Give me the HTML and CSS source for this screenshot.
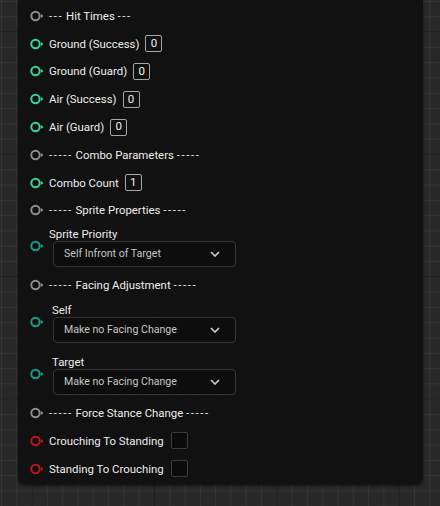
FILE: index.html
```html
<!DOCTYPE html>
<html>
<head>
<meta charset="utf-8">
<link rel="stylesheet" href="styles.css">
</head>
<body>
<div class="panel">
  <div class="row"><svg class="pin pin-gray" viewBox="0 0 14 12"><circle cx="5.5" cy="6" r="4.2"/><polygon points="11,4 13.5,6 11,8"/></svg><span class="label"><span class="dash">---</span> Hit Times <span class="dash">---</span></span></div>
  <div class="row"><svg class="pin pin-teal" viewBox="0 0 14 12"><circle cx="5.5" cy="6" r="4.2"/><polygon points="11,4 13.5,6 11,8"/></svg><span class="label">Ground (Success)</span><span class="num">0</span></div>
  <div class="row"><svg class="pin pin-teal" viewBox="0 0 14 12"><circle cx="5.5" cy="6" r="4.2"/><polygon points="11,4 13.5,6 11,8"/></svg><span class="label">Ground (Guard)</span><span class="num">0</span></div>
  <div class="row"><svg class="pin pin-teal" viewBox="0 0 14 12"><circle cx="5.5" cy="6" r="4.2"/><polygon points="11,4 13.5,6 11,8"/></svg><span class="label">Air (Success)</span><span class="num">0</span></div>
  <div class="row"><svg class="pin pin-teal" viewBox="0 0 14 12"><circle cx="5.5" cy="6" r="4.2"/><polygon points="11,4 13.5,6 11,8"/></svg><span class="label">Air (Guard)</span><span class="num">0</span></div>
  <div class="row"><svg class="pin pin-gray" viewBox="0 0 14 12"><circle cx="5.5" cy="6" r="4.2"/><polygon points="11,4 13.5,6 11,8"/></svg><span class="label"><span class="dash">-----</span> Combo Parameters <span class="dash">-----</span></span></div>
  <div class="row"><svg class="pin pin-teal" viewBox="0 0 14 12"><circle cx="5.5" cy="6" r="4.2"/><polygon points="11,4 13.5,6 11,8"/></svg><span class="label">Combo Count</span><span class="num">1</span></div>
  <div class="row"><svg class="pin pin-gray" viewBox="0 0 14 12"><circle cx="5.5" cy="6" r="4.2"/><polygon points="11,4 13.5,6 11,8"/></svg><span class="label"><span class="dash">-----</span> Sprite Properties <span class="dash">-----</span></span></div>

  <div class="field field-first">
    <svg class="pin pin-dark" viewBox="0 0 14 12"><circle cx="5.5" cy="6" r="4.2"/><polygon points="11,4 13.5,6 11,8"/></svg>
    <div class="field-body">
      <div class="field-label">Sprite Priority</div>
      <div class="select"><span>Self Infront of Target</span><svg class="chev" viewBox="0 0 10 6"><polyline points="1,1 5,5 9,1"/></svg></div>
    </div>
  </div>

  <div class="row row-after-field"><svg class="pin pin-gray" viewBox="0 0 14 12"><circle cx="5.5" cy="6" r="4.2"/><polygon points="11,4 13.5,6 11,8"/></svg><span class="label"><span class="dash">-----</span> Facing Adjustment <span class="dash">-----</span></span></div>

  <div class="field field-self">
    <svg class="pin pin-dark" viewBox="0 0 14 12"><circle cx="5.5" cy="6" r="4.2"/><polygon points="11,4 13.5,6 11,8"/></svg>
    <div class="field-body">
      <div class="field-label field-label-inset">Self</div>
      <div class="select"><span>Make no Facing Change</span><svg class="chev" viewBox="0 0 10 6"><polyline points="1,1 5,5 9,1"/></svg></div>
    </div>
  </div>

  <div class="field field-target">
    <svg class="pin pin-dark" viewBox="0 0 14 12"><circle cx="5.5" cy="6" r="4.2"/><polygon points="11,4 13.5,6 11,8"/></svg>
    <div class="field-body">
      <div class="field-label field-label-inset">Target</div>
      <div class="select"><span>Make no Facing Change</span><svg class="chev" viewBox="0 0 10 6"><polyline points="1,1 5,5 9,1"/></svg></div>
    </div>
  </div>

  <div class="row row-after-field2"><svg class="pin pin-gray" viewBox="0 0 14 12"><circle cx="5.5" cy="6" r="4.2"/><polygon points="11,4 13.5,6 11,8"/></svg><span class="label"><span class="dash">-----</span> Force Stance Change <span class="dash">-----</span></span></div>
  <div class="row"><svg class="pin pin-red" viewBox="0 0 14 12"><circle cx="5.5" cy="6" r="4.2"/><polygon points="11,4 13.5,6 11,8"/></svg><span class="label">Crouching To Standing</span><span class="check"></span></div>
  <div class="row"><svg class="pin pin-red" viewBox="0 0 14 12"><circle cx="5.5" cy="6" r="4.2"/><polygon points="11,4 13.5,6 11,8"/></svg><span class="label">Standing To Crouching</span><span class="check"></span></div>
</div>
</body>
</html>
```

FILE: styles.css
```css
html, body {
  margin: 0;
  padding: 0;
}

body {
  width: 440px;
  height: 506px;
  overflow: hidden;
  font-family: Roboto, "Liberation Sans", sans-serif;
  font-size: 11.4px;
  color: #ededed;
  background-color: #282828;
  background-image:
    linear-gradient(to right, #1d1d1d 1px, transparent 1px),
    linear-gradient(to bottom, #1d1d1d 1px, transparent 1px),
    linear-gradient(to right, #343434 1px, transparent 1px),
    linear-gradient(to bottom, #343434 1px, transparent 1px);
  background-size: 122.4px 122.4px, 122.4px 122.4px, 15.3px 15.3px, 15.3px 15.3px;
  background-position: 31.6px 31.3px, 31.6px 31.3px, 1px 1px, 1px 1px;
}

.panel {
  margin-left: 18px;
  width: 405px;
  box-sizing: border-box;
  padding: 2px 0 2px 12px;
  background: rgba(15, 16, 15, 0.95);
  border-radius: 0 0 7px 7px;
  box-shadow: 0 2px 3px rgba(0, 0, 0, 0.55);
  display: flex;
  flex-direction: column;
}

.row {
  height: 27.8px;
  display: flex;
  align-items: center;
}

.pin {
  width: 14px;
  height: 12px;
  flex: none;
  margin-right: 5px;
}

.pin circle {
  fill: none;
  stroke: currentColor;
  stroke-width: 2;
}

.pin polygon {
  fill: currentColor;
}

.pin-gray { color: #8e8e8e; }
.pin-teal { color: #34d6a6; }
.pin-dark { color: #16a08c; }
.pin-red { color: #c3141c; }

.label {
  white-space: nowrap;
  line-height: 14px;
}

.dash {
  letter-spacing: 1.6px;
}

.num {
  margin-left: 6px;
  width: 15px;
  height: 15px;
  border: 1px solid #a6a6a6;
  border-radius: 2px;
  display: flex;
  align-items: center;
  justify-content: center;
  font-size: 11.5px;
  line-height: 1;
}

.check {
  margin-left: 7px;
  width: 15px;
  height: 15px;
  border: 1px solid #3b3b3b;
  border-radius: 2px;
  background: #0b0b0b;
}

.field {
  display: flex;
  align-items: center;
}

.field-first { margin-top: 1.4px; }
.field-self { margin-top: 3px; }
.field-target { margin-top: 11px; }
.row-after-field { margin-top: 4px; }
.row-after-field2 { margin-top: 4.5px; }

.field-body {
  display: flex;
  flex-direction: column;
}

.field-label {
  line-height: 17px;
  height: 14px;
  margin-bottom: 1px;
}

.field-label-inset {
  padding-left: 3px;
}

.select {
  margin-left: 4px;
  width: 183px;
  height: 26px;
  box-sizing: border-box;
  border: 1px solid #363636;
  border-radius: 4px;
  background: #0c0d0c;
  display: flex;
  align-items: center;
  justify-content: space-between;
  padding: 0 15px 0 10px;
  font-size: 10.6px;
  color: #c6c6c6;
}

.chev {
  width: 10px;
  height: 6px;
}

.chev polyline {
  fill: none;
  stroke: #d0d0d0;
  stroke-width: 1.6;
}
```
